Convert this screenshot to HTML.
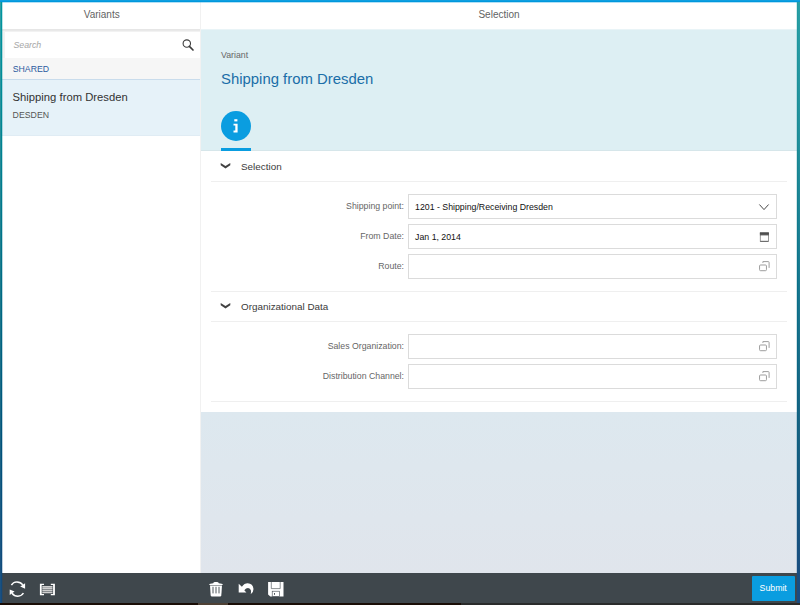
<!DOCTYPE html>
<html>
<head>
<meta charset="utf-8">
<title>Selection</title>
<style>
*{box-sizing:border-box;margin:0;padding:0}
html,body{width:800px;height:605px;overflow:hidden}
body{font-family:"Liberation Sans",sans-serif;color:#333;position:relative;background:#fff}
.abs{position:absolute}
#frame-top{left:0;top:0;width:800px;height:3px;background:linear-gradient(to bottom,#0e9fe0 0,#0e9fe0 1px,#0098dd 1px,#0098dd 2px,rgba(0,152,221,.3) 2px)}
#frame-left{left:0;top:2px;width:3px;height:603px}
#frame-left i,#frame-right i{position:absolute;top:0;height:603px;width:1px}
#fl0{left:0;background:linear-gradient(to bottom,#30a0a6 0,#28929c 100px,#1a7a8c 283px,#1a6485 441px,#1a5082 595px)}
#fl1{left:1px;background:linear-gradient(to bottom,#0096a0 0,#008a96 100px,#006c85 283px,#00527a 441px,#154a7c 595px)}
#fl2{left:2px;opacity:.27;background:linear-gradient(to bottom,#0096a0 0,#008a96 100px,#006c85 283px,#00527a 441px,#154a7c 595px)}
#frame-right{left:796px;top:2px;width:4px;height:603px}
#fr0{left:0;opacity:.2;background:linear-gradient(to bottom,#229ba2 0,#1a8894 150px,#0a7088 283px,#0f5e80 441px,#1a4b80 595px)}
#fr1{left:1px;background:linear-gradient(to bottom,#229ba2 0,#1a8894 150px,#0a7088 283px,#0f5e80 441px,#1a4b80 595px)}
#fr2{left:2px;background:linear-gradient(to bottom,#28a0a6 0,#1e8e9a 150px,#147690 283px,#156080 441px,#1a4b80 595px)}
#fr3{left:3px;background:linear-gradient(to bottom,#2aa0a6 0,#22909c 150px,#1a7a90 283px,#1a6283 441px,#1a4b80 595px)}
#frame-bottom{left:0;top:603px;width:800px;height:2px;background:linear-gradient(to right,#1a0d06 0,#1a0d06 198px,#4e4034 198px,#4e4034 228px,#1a0d06 228px,#1a0d06 461px,#2a2b2b 461px)}

/* header bars */
.hdr{top:2px;height:27px;background:#fff;text-align:center;font-size:10px;line-height:26.5px;color:#636363}
#hdrL{left:2px;width:199.5px}
#hdrR{left:201px;width:596px}
#hdrline{left:2px;top:29px;width:795px;height:1px;background:linear-gradient(to right,#e6e6e6 0,#e6e6e6 198px,#e9e9e9 198px,#e9e9e9 199px,#e9f4f7 199px)}

/* master */
#master{left:2px;top:30px;width:198px;height:543px;background:#fff}
#msep{left:200px;top:2px;width:1px;height:571px;background:#f1f1f1}
#sub{left:0;top:0;width:198px;height:28px;background:#f2f2f2;border-top:1px solid #e9e9e9}
#search{left:2.5px;top:1px;width:196px;height:25.5px;background:#fff}
#search span{position:absolute;left:9px;top:1.3px;line-height:24px;font-size:8.75px;font-style:italic;color:#a6a6a6}
#grp{left:0;top:28px;width:198px;height:21.5px;background:#f6f6f6;border-bottom:1px solid #c9dcec;font-size:8.75px;line-height:22.5px;color:#2c5a9f;padding-left:10.7px}
#item{left:0;top:49.5px;width:198px;height:56px;background:#e6f2f9;border-bottom:1px solid #e0ecf4}
#item .t{position:absolute;left:10.6px;top:10.3px;font-size:11.25px;line-height:14px;color:#333;white-space:nowrap}
#item .s{position:absolute;left:10.6px;top:30.3px;font-size:8.75px;line-height:11px;color:#555}

/* detail */
#detail{left:201px;top:30px;width:596px;height:543px;background:linear-gradient(to bottom,#dbeaf0 0,#dde8ef 382px,#e0e5ec 543px)}
#oh{left:0;top:0;width:596px;height:121px;background:#ddeff3;border-bottom:1px solid #d6e6ea}
#oh .intro{position:absolute;left:20px;top:20px;font-size:8.75px;line-height:11px;color:#666}
#oh .title{position:absolute;left:20px;top:39.6px;font-size:14.9px;line-height:18px;color:#1a6ea8;white-space:nowrap}
#circ{left:20.2px;top:81px;width:30px;height:30px;border-radius:50%;background:#0a9de0}
#uline{left:20.2px;top:118.4px;width:30px;height:2.6px;background:#0a9de0}
#form{left:0;top:121px;width:596px;height:261px;background:#fff}
.hl{position:absolute;left:10px;width:576px;height:1px;background:#efefef}
.sec{position:absolute;left:40px;font-size:9.9px;line-height:12px;color:#3a3a3a;white-space:nowrap}
.chev{position:absolute;left:19.2px}
.lbl{position:absolute;left:0;width:203px;text-align:right;font-size:8.75px;line-height:24px;color:#666;white-space:nowrap}
.inp{position:absolute;left:207px;width:369px;height:25px;border:1px solid #dbdbdb;background:#fff;font-size:8.75px;line-height:24.4px;color:#111;padding-left:6.1px;white-space:nowrap}
.inp svg{position:absolute}

/* footer */
#footer{left:2px;top:573px;width:795px;height:30px;background:#3f474c}
#submit{left:749.7px;top:2.7px;width:43px;height:25px;background:#0a9de0;border-radius:1px;color:#fff;font-size:8.75px;line-height:25px;text-align:center}
</style>
</head>
<body>
<div class="abs hdr" id="hdrL">Variants</div>
<div class="abs hdr" id="hdrR">Selection</div>
<div class="abs" id="hdrline"></div>

<div class="abs" id="master">
  <div class="abs" id="sub">
    <div class="abs" id="search"><span>Search</span>
      <svg class="abs" style="left:176px;top:6px" width="14" height="14" viewBox="0 0 14 14"><circle cx="5.8" cy="5.55" r="3.7" fill="none" stroke="#3c3c3c" stroke-width="1.1"/><path d="M8.4 8.4 L12 12" stroke="#3c3c3c" stroke-width="1.7" stroke-linecap="round"/></svg>
    </div>
  </div>
  <div class="abs" id="grp">SHARED</div>
  <div class="abs" id="item"><div class="t">Shipping from Dresden</div><div class="s">DESDEN</div></div>
</div>
<div class="abs" id="msep"></div>

<div class="abs" id="detail">
  <div class="abs" id="oh">
    <div class="intro">Variant</div>
    <div class="title">Shipping from Dresden</div>
    <div class="abs" id="circ">
      <svg width="30" height="30" viewBox="0 0 30 30" style="display:block"><rect x="13.3" y="8.2" width="3.1" height="2.2" fill="#fff"/><path d="M12.5 12.7h4.1v8.7h-4.1v-1.8h1.8v-5.1h-1.8z" fill="#fff"/></svg>
    </div>
    <div class="abs" id="uline"></div>
  </div>
  <div class="abs" id="form">
    <svg class="chev" style="top:11.4px" width="11" height="8" viewBox="0 0 11 8"><path d="M0.7 1.1 L5.5 4 L10.3 1.1 V3.3 L5.5 6.6 L0.7 3.3z" fill="#414141"/></svg>
    <div class="sec" style="top:10px">Selection</div>
    <div class="hl" style="top:30px"></div>

    <div class="lbl" style="top:43px">Shipping point:</div>
    <div class="inp" style="top:43px">1201 - Shipping/Receiving Dresden
      <svg style="left:349.1px;top:8.6px" width="12" height="8" viewBox="0 0 12 8"><path d="M1.4 0.5 L6 5.6 L10.6 0.5" fill="none" stroke="#484848" stroke-width="1"/></svg>
    </div>
    <div class="lbl" style="top:73px">From Date:</div>
    <div class="inp" style="top:73px">Jan 1, 2014
      <svg style="left:350.2px;top:5.5px" width="10" height="11" viewBox="0 0 10 11"><rect x="1.25" y="1.9" width="8.3" height="8.5" fill="none" stroke="#707070" stroke-width="0.7"/><path d="M1.3 10.3 H9.5" stroke="#555" stroke-width="0.8"/><rect x="0.9" y="1.7" width="9" height="2.7" fill="#5a5a5a"/><rect x="0.9" y="1.6" width="9" height="0.8" fill="#3c3c3c"/><rect x="2.6" y="1.1" width="1.6" height="0.7" fill="#777"/><rect x="6.4" y="1.1" width="1.6" height="0.7" fill="#777"/></svg>
    </div>
    <div class="lbl" style="top:103px">Route:</div>
    <div class="inp" style="top:103px">
      <svg style="left:350px;top:5.4px" width="12" height="12" viewBox="0 0 12 12"><rect x="0.55" y="5" width="6.9" height="5.7" rx="1" fill="none" stroke="#999" stroke-width="0.95"/><path d="M3.9 2.9 V1.6 H9.2 Q10.1 1.6 10.1 2.5 V7.9" fill="none" stroke="#999" stroke-width="0.95"/></svg>
    </div>
    <div class="hl" style="top:140px"></div>

    <svg class="chev" style="top:151.4px" width="11" height="8" viewBox="0 0 11 8"><path d="M0.7 1.1 L5.5 4 L10.3 1.1 V3.3 L5.5 6.6 L0.7 3.3z" fill="#414141"/></svg>
    <div class="sec" style="top:150px">Organizational Data</div>
    <div class="hl" style="top:170px"></div>

    <div class="lbl" style="top:183px">Sales Organization:</div>
    <div class="inp" style="top:183px">
      <svg style="left:350px;top:5.4px" width="12" height="12" viewBox="0 0 12 12"><rect x="0.55" y="5" width="6.9" height="5.7" rx="1" fill="none" stroke="#999" stroke-width="0.95"/><path d="M3.9 2.9 V1.6 H9.2 Q10.1 1.6 10.1 2.5 V7.9" fill="none" stroke="#999" stroke-width="0.95"/></svg>
    </div>
    <div class="lbl" style="top:213px">Distribution Channel:</div>
    <div class="inp" style="top:213px">
      <svg style="left:350px;top:5.4px" width="12" height="12" viewBox="0 0 12 12"><rect x="0.55" y="5" width="6.9" height="5.7" rx="1" fill="none" stroke="#999" stroke-width="0.95"/><path d="M3.9 2.9 V1.6 H9.2 Q10.1 1.6 10.1 2.5 V7.9" fill="none" stroke="#999" stroke-width="0.95"/></svg>
    </div>
    <div class="hl" style="top:250px"></div>
  </div>
</div>

<div class="abs" id="footer">
  <svg class="abs" style="left:0;top:0" width="300" height="30" viewBox="0 0 300 30">
    <!-- refresh -->
    <g fill="none" stroke="#fff" stroke-width="1.45">
      <path d="M9.4 12.2 Q11 9.2 15 8.9 Q18.6 8.9 20.8 11.9"/>
      <path d="M21.4 20 Q19.8 23 15.8 23.3 Q12.2 23.3 10 20.3"/>
    </g>
    <path d="M23.1 10.3 V15.8 L18.2 13.6z M7.7 21.9 V16.4 L12.6 18.6z" fill="#fff"/>
    <!-- list -->
    <path d="M37.9 10.8 H42 V12 H39.7 V21 H42 V22.2 H37.9z M52.9 10.8 H48.8 V12 H51.1 V21 H48.8 V22.2 H52.9z" fill="#fff"/>
    <path d="M40.3 13.65 H50.5 M40.3 15.6 H50.5 M40.3 17.55 H50.5 M40.3 19.5 H50.5" stroke="#cfcfcf" stroke-width="1.5"/>
    <!-- trash -->
    <path d="M207.2 12 Q207.3 10.8 208.4 10.7 L211.2 10.3 Q211.6 9 213 9 H215 Q216.4 9 216.8 10.3 L219.6 10.7 Q220.7 10.8 220.8 12z" fill="#fff"/>
    <path d="M208 12.6 H220 L219.3 22.4 Q219.2 23.5 218 23.5 H210 Q208.8 23.5 208.7 22.4z" fill="#fff"/>
    <path d="M211 13.8 V20.4 M214 13.8 V20.4 M217 13.8 V20.4" stroke="#3f474c" stroke-width="0.9"/>
    <!-- undo -->
    <path transform="translate(236.7 10.3)" d="M0 .5 V9.1 H7.7 L5.6 6.9 Q7.3 4.6 9.3 4.6 Q11.6 4.8 12.2 7 Q12.6 8.8 12 10.9 Q14.8 9 14.8 5.6 Q14.2 0.4 9 0 Q5.6 0 3.2 3.4 Z" fill="#fff"/>
    <!-- save -->
    <path d="M266.1 8.9 H281.5 V23.6 H268.3 L266.1 21.4z" fill="#fff"/>
    <path d="M269.3 8.9 V15.6 H278.2 V8.9" fill="none" stroke="#3f474c" stroke-width="0.6"/>
    <rect x="270.2" y="18.2" width="7.4" height="5.2" fill="none" stroke="#3f474c" stroke-width="0.6"/>
    <rect x="272.1" y="20" width="0.9" height="1.8" fill="#3f474c"/>
  </svg>
  <div class="abs" id="submit">Submit</div>
</div>

<div class="abs" id="frame-top"></div>
<div class="abs" id="frame-left"><i id="fl0"></i><i id="fl1"></i><i id="fl2"></i></div>
<div class="abs" id="frame-right"><i id="fr0"></i><i id="fr1"></i><i id="fr2"></i><i id="fr3"></i></div>
<div class="abs" id="frame-bottom"></div>
</body>
</html>
